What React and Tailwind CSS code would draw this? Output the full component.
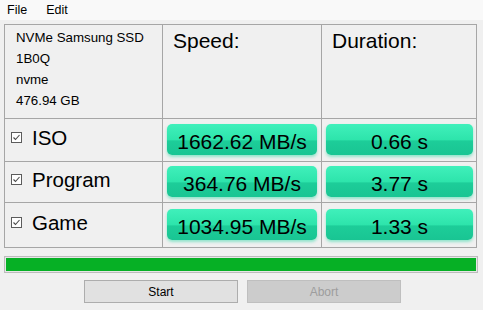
import React from "react";

const rows = [
  { name: "ISO", speed: "1662.62 MB/s", time: "0.66 s", h: "h-[42px]" },
  { name: "Program", speed: "364.76 MB/s", time: "3.77 s", h: "h-[40px]" },
  { name: "Game", speed: "1034.95 MB/s", time: "1.33 s", h: "h-[44px]" },
];

function Check() {
  return (
    <svg width="11" height="11" viewBox="0 0 11 11" className="shrink-0">
      <rect x="0.5" y="0.5" width="10" height="10" fill="#ffffff" stroke="#5c5c5c" />
      <path d="M2.5 5.5 L4.5 7.5 L8.5 3" fill="none" stroke="#4a4a4a" strokeWidth="1.1" />
    </svg>
  );
}

function Result({ children }) {
  return (
    <div className="h-[31px] mb-[2px] w-full rounded-[5px] flex items-center justify-center text-[21px] text-black bg-[linear-gradient(to_bottom,#40f0bb_0%,#2de4ab_52%,#1dcd99_54%,#19c593_100%)] shadow-[0_2px_3px_rgba(30,215,160,0.45)]">
      <span className="mt-[5px]">{children}</span>
    </div>
  );
}

export default function App() {
  return (
    <div className="w-[483px] h-[310px] bg-[#f0f0f0] font-['Liberation_Sans',Arial,sans-serif] overflow-hidden">
      <div className="h-[20px] bg-[#f9f9f9] flex items-center text-[12.5px] text-black">
        <span className="ml-[7px]">File</span>
        <span className="ml-[19px]">Edit</span>
      </div>

      <div className="ml-[4px] mt-[4px] w-[473px] grid grid-cols-[157px_158px_154px] gap-px p-px bg-[#a6a6a6]">
        <div className="h-[93px] bg-[#f0f0f0] pl-[11px] pt-[2px] text-[13.3px] leading-[21px] text-black">
          <div>NVMe Samsung SSD</div>
          <div>1B0Q</div>
          <div>nvme</div>
          <div>476.94 GB</div>
        </div>
        <div className="h-[93px] bg-[#f0f0f0] pl-[10px] pt-[4px] text-[21px] leading-[24px] text-black">
          Speed:
        </div>
        <div className="h-[93px] bg-[#f0f0f0] pl-[10px] pt-[4px] text-[21px] leading-[24px] text-black">
          Duration:
        </div>

        {rows.map((r) => (
          <React.Fragment key={r.name}>
            <div className={`${r.h} bg-[#f0f0f0] flex items-center pl-[6px]`}>
              <div className="flex items-center gap-[10px] mb-[5px] text-[20.5px] leading-[24px] text-black">
                <Check />
                <span>{r.name}</span>
              </div>
            </div>
            <div className={`${r.h} bg-[#f0f0f0] flex items-center px-[4px]`}>
              <Result>{r.speed}</Result>
            </div>
            <div className={`${r.h} bg-[#f0f0f0] flex items-center pl-[4px] pr-[3px]`}>
              <Result>{r.time}</Result>
            </div>
          </React.Fragment>
        ))}
      </div>

      <div className="ml-[4px] mt-[8px] w-[474px] h-[17px] border border-[#bcbcbc] bg-[#e6e6e6] p-px">
        <div className="w-full h-full bg-[#06b025]" />
      </div>

      <div className="mt-[7px] flex justify-center gap-[9px] pl-[2px] text-[12px]">
        <button className="w-[154px] h-[23px] bg-[#e1e1e1] border border-[#adadad] text-black">
          Start
        </button>
        <button className="w-[154px] h-[23px] bg-[#cccccc] border border-[#bfbfbf] text-[#9d9d9d]">
          Abort
        </button>
      </div>
    </div>
  );
}
